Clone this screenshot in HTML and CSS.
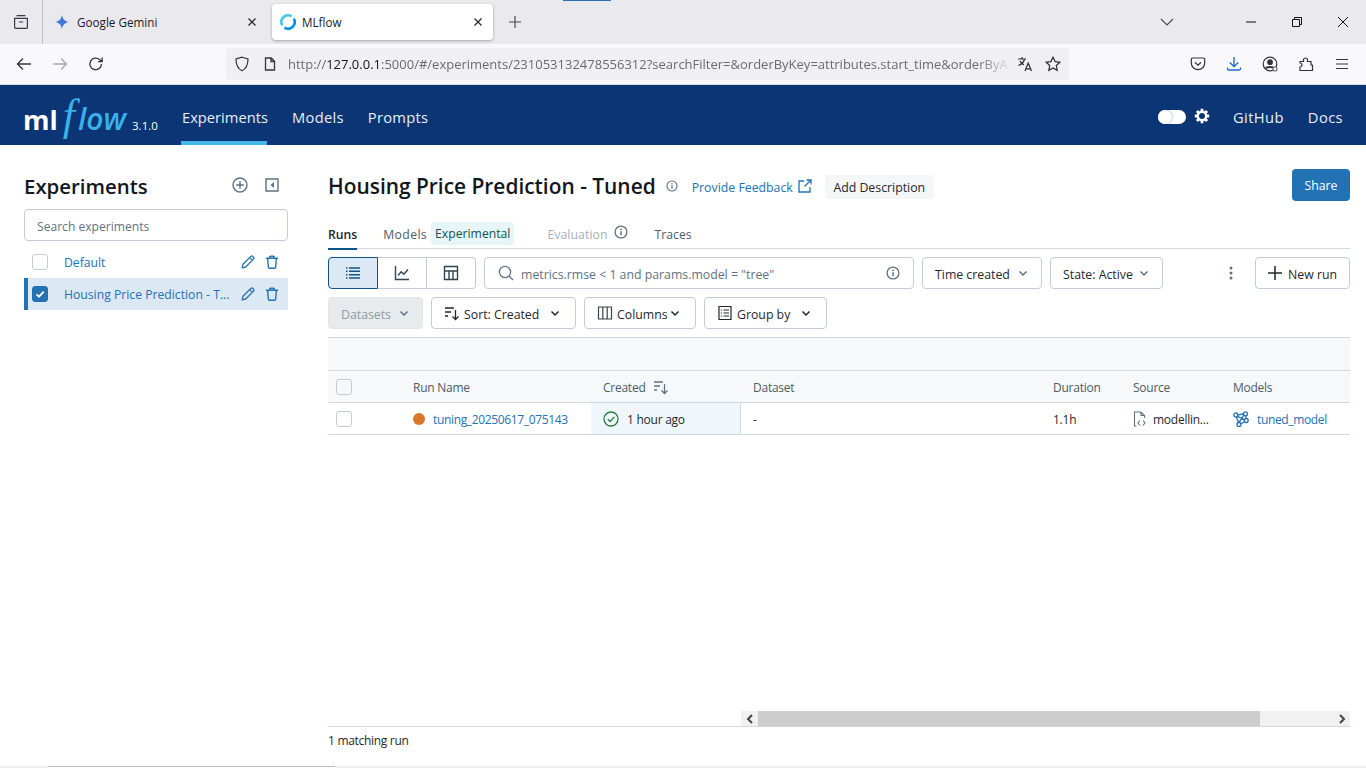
FILE: index.html
```html
<!DOCTYPE html>
<html lang="en">
<head>
  <meta charset="UTF-8">
  <title>MLflow</title>
  <link rel="stylesheet" href="styles.css">
</head>
<body>
  <svg class="sprite" width="0" height="0">
    <symbol id="i-chev" viewBox="0 0 12 12"><path d="M2.5 4.5 6 8l3.5-3.5" fill="none" stroke="currentColor" stroke-width="1.5"/></symbol>
    <symbol id="i-info" viewBox="0 0 14 14"><circle cx="7" cy="7" r="5.9" fill="none" stroke="currentColor" stroke-width="1.3"/><path d="M7 6.2v4" stroke="currentColor" stroke-width="1.5"/><circle cx="7" cy="4.3" r=".9" fill="currentColor"/></symbol>
    <symbol id="i-pencil" viewBox="0 0 14 14"><path d="M1.2 12.8 2 9.2 9.8 1.4a1.3 1.3 0 0 1 1.8 0l.9.9a1.3 1.3 0 0 1 0 1.8L4.7 12z M8.6 2.6l2.8 2.8" fill="none" stroke="currentColor" stroke-width="1.3" stroke-linejoin="round"/></symbol>
    <symbol id="i-trash" viewBox="0 0 14 14"><path d="M1 3.3h12M4.7 3.3V2.2a1 1 0 0 1 1-1h2.6a1 1 0 0 1 1 1v1.1M2.6 3.3l.8 9a1 1 0 0 0 1 .9h5.2a1 1 0 0 0 1-.9l.8-9" fill="none" stroke="currentColor" stroke-width="1.4"/></symbol>
  </svg>

  <span class="loading-mark"></span>

  <div class="tabstrip">
    <div class="strip-left">
      <svg class="ico16" viewBox="0 0 16 16" fill="none" stroke="#3b3b45" stroke-width="1.2"><path d="M3.5 1.6h9M1.6 4.4h12.8v9a1 1 0 0 1-1 1H2.6a1 1 0 0 1-1-1z M5.8 8h4.4"/></svg>
    </div>
    <div class="tab">
      <svg class="ico14" viewBox="0 0 14 14"><path d="M7 0c.5 3.800 3 6.400 7 7-4 .6-6.500 3.200-7 7-.5-3.800-3-6.400-7-7 4-.6 6.500-3.200 7-7z" fill="#3f78d8"/></svg>
      <span class="tab-title">Google Gemini</span>
      <svg class="tab-x" viewBox="0 0 10 10"><path d="M1.5 1.5l7 7m0-7-7 7" stroke="#2b2b33" stroke-width="1.3"/></svg>
    </div>
    <div class="tab tab-active">
      <svg class="ico16" viewBox="0 0 16 16" fill="none" stroke-width="2.6"><path d="M2.2 11.3A6.700 6.700 0 0 1 11.5 2.300" stroke="#43c9ed"/><path d="M13.8 4.700A6.700 6.700 0 0 1 4.500 13.700" stroke="#0194e2"/></svg>
      <span class="tab-title">MLflow</span>
      <svg class="tab-x" viewBox="0 0 10 10"><path d="M1.5 1.5l7 7m0-7-7 7" stroke="#2b2b33" stroke-width="1.3"/></svg>
    </div>
    <svg class="newtab" viewBox="0 0 14 14"><path d="M7 1v12M1 7h12" stroke="#4b4b55" stroke-width="1.2"/></svg>
    <div class="win-btns">
      <svg class="ico14 tabs-down" viewBox="0 0 14 14"><path d="M1 4l6 6 6-6" fill="none" stroke="#4b4b55" stroke-width="1.2"/></svg>
      <svg class="win-ico" viewBox="0 0 12 12"><path d="M1 6h10" stroke="#111" stroke-width="1"/></svg>
      <svg class="win-ico" viewBox="0 0 12 12" fill="none" stroke="#111"><path d="M1.5 3.500h7v7h-7z M3.500 3.500v-2h7v7h-2"/></svg>
      <svg class="win-ico" viewBox="0 0 12 12"><path d="M1 1l10 10m0-10L1 11" stroke="#111" stroke-width="1"/></svg>
    </div>
  </div>

  <div class="toolbar">
    <div class="nav-btns">
      <svg class="ico16" viewBox="0 0 16 16" fill="none" stroke="#33333b" stroke-width="1.3"><path d="M15 8H1.500M7 2.500 1.500 8 7 13.500"/></svg>
      <svg class="ico16" viewBox="0 0 16 16" fill="none" stroke="#a9a9b0" stroke-width="1.3"><path d="M1 8h13.500M9 2.500 14.500 8 9 13.500"/></svg>
      <svg class="ico16" viewBox="0 0 16 16" fill="none" stroke="#33333b" stroke-width="1.3"><path d="M13.5 8A5.800 5.800 0 1 1 11.600 3.600L14 5.500M14.200 1.500v4.200H10"/></svg>
    </div>
    <div class="urlbar">
      <svg class="ico16" viewBox="0 0 16 16" fill="none" stroke="#33333b" stroke-width="1.2"><path d="M8 1.200 14 3c0 6-1.800 9.800-6 11.800C3.800 12.800 2 9 2 3z"/></svg>
      <svg class="ico14 page-ico" viewBox="0 0 14 14" fill="none" stroke="#33333b" stroke-width="1.3"><path d="M2.500 1h5.700L11.500 4.300V13h-9z M8 1v3.500h3.500"/></svg>
      <span class="url">http://<b>127.0.0.1</b>:5000/#/experiments/231053132478556312?searchFilter=&amp;orderByKey=attributes.start_time&amp;orderByA</span>
      <svg class="ico16 translate" viewBox="0 0 16 16" fill="none" stroke="#2b2b33" stroke-width="1.2"><path d="M1 3h8M5 1v2M7.500 3c-.7 3-3 5.500-6 6.500M3 5c.8 2 2.300 3.200 4 3.800M8 15l3.200-8 3.300 8M9 12.800h4.500"/></svg>
      <svg class="ico16" viewBox="0 0 16 16" fill="none" stroke="#2b2b33" stroke-width="1.2"><path d="m8 1.200 2.100 4.400 4.700.6-3.500 3.300.9 4.800L8 12l-4.200 2.300.9-4.800L1.200 6.200l4.700-.6z"/></svg>
    </div>
    <div class="tool-right">
      <svg class="ico16" viewBox="0 0 16 16" fill="none" stroke="#33333b" stroke-width="1.2"><path d="M2.500 2h11a1.200 1.200 0 0 1 1.200 1.200V7A6.700 6.700 0 0 1 1.300 7V3.200A1.200 1.200 0 0 1 2.500 2z M5 6.300l3 2.800 3-2.800"/></svg>
      <svg class="ico16" viewBox="0 0 16 16" fill="none" stroke="#1a66c9" stroke-width="1.3"><path d="M8 1v9.500M3.800 6.500 8 10.700l4.200-4.200M1.500 11.500v1.200a1.300 1.300 0 0 0 1.300 1.300h10.400a1.300 1.300 0 0 0 1.300-1.300v-1.200"/></svg>
      <svg class="ico16" viewBox="0 0 16 16" fill="none" stroke="#33333b" stroke-width="1.2"><circle cx="8" cy="8" r="6.800"/><circle cx="8" cy="6.200" r="2.300" fill="#33333b"/><path d="M3.800 12.500c1-2 7.400-2 8.400 0" stroke-width="2"/><circle cx="13" cy="13" r="2" fill="#f9f9fb" stroke="#777"/></svg>
      <svg class="ico16" viewBox="0 0 16 16" fill="none" stroke="#33333b" stroke-width="1.2"><path d="M2 5.500h3.500V4a2 2 0 0 1 4 0v1.500H13V9h1.500V14.500H2V11a2 2 0 0 0 0-4z"/></svg>
      <svg class="ico16" viewBox="0 0 16 16" stroke="#33333b" stroke-width="1.2"><path d="M2 3.500h12M2 8h12M2 12.500h12"/></svg>
    </div>
  </div>

  <header class="topnav">
    <div class="logo"><span class="logo-ml">ml</span><span class="logo-f">f</span><span class="logo-flow">low</span><span class="version">3.1.0</span></div>
    <nav class="topnav-links">
      <a class="topnav-link current">Experiments</a>
      <a class="topnav-link">Models</a>
      <a class="topnav-link">Prompts</a>
    </nav>
    <div class="topnav-right">
      <span class="toggle"><span class="knob"></span></span>
      <svg class="gear" viewBox="0 0 16 16"><path d="M8 .8v14.400M.8 8h14.400M2.900 2.900l10.200 10.200M13.100 2.900 2.900 13.100" stroke="#fff" stroke-width="2.800"/><circle cx="8" cy="8" r="5.400" fill="#fff"/><circle cx="8" cy="8" r="3" fill="#0b3574"/></svg>
      <a class="topnav-link github">GitHub</a>
      <a class="topnav-link">Docs</a>
    </div>
  </header>

  <div class="page">
    <aside class="sidebar">
      <div class="side-head">
        <h2>Experiments</h2>
        <svg class="side-ico" viewBox="0 0 16 16" fill="none" stroke="#5f7281" stroke-width="1.4"><circle cx="8" cy="8" r="7"/><path d="M8 4.200v7.600M4.200 8h7.600"/></svg>
        <svg class="side-ico collapse" viewBox="0 0 14 14"><path d="M1 1h12v12H1z" fill="none" stroke="#5f7281" stroke-width="1.4"/><path d="M9 4v6L5.500 7z" fill="#5f7281"/></svg>
      </div>
      <input class="side-search" type="text" placeholder="Search experiments">
      <div class="exp-row">
        <span class="check"></span>
        <span class="exp-name">Default</span>
        <svg class="exp-ico"><use href="#i-pencil"/></svg>
        <svg class="exp-ico"><use href="#i-trash"/></svg>
      </div>
      <div class="exp-row selected">
        <span class="check on"><svg viewBox="0 0 12 12"><path d="M2.500 6.300 5 8.700l4.700-5" fill="none" stroke="#fff" stroke-width="1.800"/></svg></span>
        <span class="exp-name">Housing Price Prediction - T...</span>
        <svg class="exp-ico"><use href="#i-pencil"/></svg>
        <svg class="exp-ico"><use href="#i-trash"/></svg>
      </div>
    </aside>

    <main class="main">
      <div class="title-row">
        <h1>Housing Price Prediction - Tuned</h1>
        <svg class="info title-info"><use href="#i-info"/></svg>
        <a class="feedback">Provide Feedback</a>
        <svg class="ext" viewBox="0 0 14 14" fill="none" stroke="#2272b4" stroke-width="1.3"><path d="M6 2H1v11h11V8M8.500 1H13v4.500M13 1 6.500 7.500"/></svg>
        <button class="add-desc">Add Description</button>
        <button class="share">Share</button>
      </div>

      <div class="tabs">
        <a class="tab-link active">Runs</a>
        <a class="tab-link models">Models</a>
        <span class="tag">Experimental</span>
        <a class="tab-link disabled">Evaluation</a>
        <svg class="info eval-info"><use href="#i-info"/></svg>
        <a class="tab-link traces">Traces</a>
      </div>

      <div class="controls">
        <div class="segments">
          <span class="segment on"><svg class="ico16" viewBox="0 0 16 16" stroke="#0e538b" stroke-width="1.4"><path d="M4 3h11M4 6.300h11M4 9.700h11M4 13h11M1 3h1.500M1 6.300h1.500M1 9.700h1.500M1 13h1.500"/></svg></span>
          <span class="segment"><svg class="ico16" viewBox="0 0 16 16" fill="none" stroke="#33434f" stroke-width="1.4"><path d="M1.500 1v13.500H15M4 10.500l3.200-3.700 2.600 2.400L14 4.500"/></svg></span>
          <span class="segment"><svg class="ico16" viewBox="0 0 16 16" fill="none" stroke="#33434f" stroke-width="1.4"><path d="M1.500 1.500h13v13h-13z M1.500 6h13M6 6v8.500M10 6v8.500"/></svg></span>
        </div>
        <div class="search">
          <svg class="ico16" viewBox="0 0 16 16" fill="none" stroke="#5f7281" stroke-width="1.3"><circle cx="7" cy="7" r="5.600"/><path d="m11 11 4 4"/></svg>
          <span class="search-text">metrics.rmse &lt; 1 and params.model = "tree"</span>
          <svg class="info"><use href="#i-info"/></svg>
        </div>
        <button class="btn time">Time created<svg class="chev"><use href="#i-chev"/></svg></button>
        <button class="btn state">State: Active<svg class="chev"><use href="#i-chev"/></svg></button>
        <svg class="kebab" viewBox="0 0 4 14" fill="#5f7281"><circle cx="2" cy="2" r="1.500"/><circle cx="2" cy="7" r="1.500"/><circle cx="2" cy="12" r="1.500"/></svg>
        <button class="btn new-run"><svg class="plus" viewBox="0 0 14 14"><path d="M7 0v14M0 7h14" stroke="#1f272d" stroke-width="1.500"/></svg>New run</button>
      </div>

      <div class="controls second">
        <button class="btn datasets">Datasets<svg class="chev"><use href="#i-chev"/></svg></button>
        <button class="btn sort"><svg class="ico16" viewBox="0 0 16 16" fill="none" stroke="#1f272d" stroke-width="1.3"><path d="M1 3h9M1 7h6M1 11h3M11.500 5v9.500M8.500 11.500l3 3 3-3"/></svg>Sort: Created<svg class="chev"><use href="#i-chev"/></svg></button>
        <button class="btn columns"><svg class="ico16" viewBox="0 0 16 16" fill="none" stroke="#33434f" stroke-width="1.2"><path d="M1.500 2h13v12h-13z M5.800 2v12M10.200 2v12"/></svg>Columns<svg class="chev small"><use href="#i-chev"/></svg></button>
        <button class="btn group"><svg class="ico16" viewBox="0 0 16 16" fill="none" stroke="#1f272d" stroke-width="1.2"><path d="M2 1.500h12v13H2z M6.500 5H12M6.500 8H12M6.500 11H12M3.800 5H5M3.800 8H5M3.800 11H5"/></svg>Group by<svg class="chev"><use href="#i-chev"/></svg></button>
      </div>

      <div class="table-wrap">
        <div class="band"></div>
        <div class="grid head">
          <div class="cell"><span class="check grey"></span></div>
          <div class="cell flush">Run Name</div>
          <div class="cell">Created<svg class="sort-ico" viewBox="0 0 16 16" fill="none" stroke="#5f7281" stroke-width="1.3"><path d="M1 3h9M1 7h6M1 11h3M11.500 5v9.500M8.500 11.500l3 3 3-3"/></svg></div>
          <div class="cell">Dataset</div>
          <div class="cell">Duration</div>
          <div class="cell">Source</div>
          <div class="cell">Models</div>
        </div>
        <div class="grid row">
          <div class="cell"><span class="check grey"></span></div>
          <div class="cell flush"><span class="dot"></span><a class="link">tuning_20250617_075143</a></div>
          <div class="cell created"><svg class="ok" viewBox="0 0 16 16" fill="none" stroke="#277c43" stroke-width="1.3"><circle cx="8" cy="8" r="7"/><path d="m4.800 8.200 2.300 2.300 4.200-4.600"/></svg>1 hour ago</div>
          <div class="cell">-</div>
          <div class="cell">1.1h</div>
          <div class="cell"><svg class="src" viewBox="0 0 14 16" fill="none" stroke="#5f7281" stroke-width="1.1"><path d="M3.500 15H1.500V1h6.500l3.500 3.500V7M8 1v3.500h3.500M7 9.500 5 12l2 2.500M10 9.500l2 2.500-2 2.500"/></svg>modellin...</div>
          <div class="cell"><svg class="model" viewBox="0 0 16 16" fill="none" stroke="#2272b4" stroke-width="1.3"><circle cx="2.800" cy="4" r="2"/><circle cx="12.500" cy="2.800" r="2"/><circle cx="13.200" cy="9.500" r="2"/><circle cx="6" cy="13.500" r="2"/><path d="M4.800 3.800l5.700-.8M4.300 5.300l7.200 3.200M3.500 6l2 5.500M12.700 4.800l.4 2.700M11.500 10.700 7.800 12.800M11 3.800 6 11.600"/></svg><a class="link">tuned_model</a></div>
        </div>
        <div class="spacer"></div>
        <div class="scrollbar">
          <span class="arrow"><svg viewBox="0 0 8 10"><path d="M6 1 2 5l4 4" fill="none" stroke="#444" stroke-width="2"/></svg></span>
          <span class="thumb"></span>
          <span class="arrow end"><svg viewBox="0 0 8 10"><path d="m2 1 4 4-4 4" fill="none" stroke="#444" stroke-width="2"/></svg></span>
        </div>
      </div>
      <div class="status">1 matching run</div>
    </main>
  </div>

  <div class="taskbar"><span class="task-item"></span></div>
</body>
</html>
```

FILE: styles.css
```css
* {
  box-sizing: border-box;
}
html, body {
  height: 100%;
}
body {
  margin: 0;
  height: 768px;
  overflow: hidden;
  display: flex;
  flex-direction: column;
  background: #fff;
  color: #1f272d;
  font-family: "Open Sans", "Noto Sans", sans-serif;
  font-size: 12.3px;
}
a {
  text-decoration: none;
}
button {
  font-family: inherit;
  font-size: inherit;
  color: inherit;
}
.sprite {
  position: absolute;
}
.ico14 {
  width: 14px;
  height: 14px;
  flex: none;
}
.ico16 {
  width: 16px;
  height: 16px;
  flex: none;
}

/* browser chrome */
.loading-mark {
  position: absolute;
  left: 563px;
  top: 0;
  width: 48px;
  height: 1px;
  background: #2a6fb0;
}
.tabstrip {
  height: 44px;
  flex: none;
  display: flex;
  align-items: center;
  background: #e9e9ee;
}
.strip-left {
  width: 43px;
  height: 44px;
  display: flex;
  align-items: center;
  justify-content: center;
  border-right: 1px solid #bdbdc4;
}
.tab {
  width: 229px;
  height: 36px;
  display: flex;
  align-items: center;
  padding: 0 15px 0 12px;
  gap: 8px;
  font-size: 11.7px;
  color: #1b1b22;
}
.tab-active {
  width: 221px;
  background: #fff;
  border-radius: 4px;
  box-shadow: 0 1px 3px rgba(0, 0, 0, 0.3);
  padding: 0 10px 0 8px;
  gap: 6px;
}
.tab-title {
  flex: 1;
}
.tab-x {
  width: 10px;
  height: 10px;
}
.newtab {
  width: 14px;
  height: 14px;
  margin-left: 15px;
}
.win-btns {
  margin-left: auto;
  display: flex;
  align-items: center;
  padding-right: 17px;
}
.tabs-down {
  margin-right: 37px;
}
.win-ico {
  width: 12px;
  height: 12px;
  margin-left: 34px;
}
.toolbar {
  height: 41px;
  flex: none;
  display: flex;
  align-items: center;
  background: #f9f9fb;
  border-bottom: 1px solid #dcdce0;
}
.nav-btns {
  width: 226px;
  display: flex;
  gap: 20px;
  padding-left: 16px;
}
.urlbar {
  width: 843px;
  height: 32px;
  display: flex;
  align-items: center;
  gap: 9px;
  padding: 0 8px;
  background: #f0f0f4;
  border-radius: 4px;
}
.page-ico {
  margin-left: 4px;
}
.url {
  flex: 1;
  min-width: 0;
  margin-left: 2px;
  white-space: nowrap;
  font-size: 13px;
  color: #6a6a72;
  -webkit-mask-image: linear-gradient(to right, #000 690px, transparent 724px);
  mask-image: linear-gradient(to right, #000 690px, transparent 724px);
}
.url b {
  font-weight: 400;
  color: #15141a;
}
.translate {
  margin-right: 3px;
}
.tool-right {
  display: flex;
  margin-left: 121px;
  gap: 20px;
}

/* top nav */
.topnav {
  height: 60px;
  flex: none;
  display: flex;
  align-items: center;
  background: #0b3574;
  color: #fff;
  padding: 0 23px 0 24px;
}
.logo {
  width: 157px;
  display: flex;
  align-items: baseline;
  color: #fff;
  line-height: 1;
  padding-top: 6px;
}
.logo-ml {
  font-size: 27px;
  font-weight: 700;
  margin-left: -1px;
}
.logo-f {
  font-family: "Liberation Serif", serif;
  font-style: italic;
  font-size: 44px;
  line-height: 0.6;
  color: #3bb0ea;
  margin-left: 5px;
  margin-right: 3px;
}
.logo-flow {
  font-style: italic;
  font-weight: 600;
  font-size: 30px;
  color: #3bb0ea;
}
.version {
  font-size: 11.5px;
  margin-left: 6px;
}
.topnav-links {
  display: flex;
  gap: 24px;
  align-self: stretch;
}
.topnav-link {
  display: flex;
  align-items: center;
  height: 100%;
  padding-top: 4px;
  font-size: 14.7px;
  letter-spacing: 0.3px;
  color: #e8eef6;
}
.topnav-link.current {
  border-bottom: 4px solid #43b8e8;
  padding-top: 8px;
  padding-left: 1px;
  width: 86px;
  margin-right: 1px;
  letter-spacing: 0;
}
.topnav-right {
  margin-left: auto;
  display: flex;
  align-items: center;
  align-self: stretch;
  gap: 24px;
}
.topnav-right .topnav-link {
  letter-spacing: 0.4px;
}
.toggle {
  width: 28px;
  height: 14px;
  margin-top: 4px;
  background: #fff;
  border-radius: 7px;
  position: relative;
}
.knob {
  position: absolute;
  left: 0;
  top: 0;
  width: 14px;
  height: 14px;
  border-radius: 50%;
  background: #fff;
  box-shadow: 0 0 2px rgba(11, 53, 116, 0.6);
}
.gear {
  width: 16px;
  height: 16px;
  margin-left: -16px;
  margin-top: 2px;
}
.github {
  margin-left: -1px;
}

/* page */
.page {
  flex: 1;
  min-height: 0;
  display: flex;
}
.sidebar {
  width: 288px;
  flex: none;
  padding: 24px 0 0 24px;
}
.side-head {
  height: 34px;
  display: flex;
  align-items: center;
}
.side-head h2 {
  flex: 1;
  margin: 0;
  font-size: 20.4px;
  font-weight: 600;
  color: #11171c;
}
.side-ico {
  width: 16px;
  height: 16px;
  margin: -2px 10px 0 0;
}
.side-ico.collapse {
  width: 14px;
  height: 14px;
  margin: -2px 9px 0 7px;
}
.side-search {
  display: block;
  width: 100%;
  height: 32px;
  margin-top: 6px;
  border: 1px solid #c0cdd8;
  border-radius: 4px;
  padding: 2px 12px 0;
  font-family: inherit;
  font-size: 12.1px;
  outline: none;
}
.side-search::placeholder {
  color: #5f7281;
}
.exp-row {
  height: 32px;
  display: flex;
  align-items: center;
  padding: 0 9px 0 8px;
  color: #2272b4;
}
.side-search + .exp-row {
  margin-top: 5px;
}
.exp-row.selected {
  background: #dce8f3;
  border-left: 4px solid #2272b4;
  padding-left: 4px;
}
.check {
  width: 16px;
  height: 16px;
  flex: none;
  display: block;
  border: 1px solid #c0cdd8;
  border-radius: 3px;
  background: #fff;
}
.check.on {
  background: #2272b4;
  border-color: #2272b4;
  padding: 1px;
}
.check.on svg {
  display: block;
  width: 12px;
  height: 12px;
}
.exp-name {
  flex: 1;
  min-width: 0;
  margin-left: 16px;
  font-size: 12.2px;
  white-space: nowrap;
}
.exp-ico {
  width: 14px;
  height: 14px;
  flex: none;
  margin-left: 10px;
}

.main {
  flex: 1;
  min-width: 0;
  display: flex;
  flex-direction: column;
  margin-left: 40px;
  padding: 24px 16px 0 0;
}
.title-row {
  height: 32px;
  flex: none;
  display: flex;
  align-items: center;
}
.title-row h1 {
  margin: 2px 0 0;
  font-size: 20.9px;
  font-weight: 600;
  color: #11171c;
  white-space: nowrap;
}
.info {
  width: 14px;
  height: 14px;
  flex: none;
  color: #5f7281;
}
.title-info {
  width: 12px;
  height: 12px;
  margin: 2px 0 0 10px;
}
.feedback {
  margin: 4px 0 0 14px;
  color: #2272b4;
}
.ext {
  width: 14px;
  height: 14px;
  margin: 2px 0 0 5px;
}
.add-desc {
  margin: 4px 0 0 13px;
  height: 24px;
  width: 109px;
  padding: 0;
  border: none;
  border-radius: 4px;
  background: #f5f6f7;
}
.share {
  margin-left: auto;
  width: 58px;
  height: 32px;
  padding: 0;
  border: none;
  border-radius: 4px;
  background: #2272b4;
  color: #fff;
}
.tabs {
  margin-top: 16px;
  height: 32px;
  flex: none;
  display: flex;
  align-items: center;
  font-size: 12.2px;
  border-bottom: 1px solid #d1d9e1;
}
.tab-link {
  height: 100%;
  display: flex;
  align-items: center;
  padding-top: 4px;
  color: #4b5c69;
}
.tab-link.active {
  margin-right: 26px;
  font-weight: 600;
  color: #1f272d;
  border-bottom: 2px solid #0e538b;
  margin-bottom: -1px;
  height: 33px;
}
.tab-link.models {
  letter-spacing: 0.4px;
}
.tab-link.disabled {
  margin-left: 33px;
  letter-spacing: 0.1px;
  color: #a3b0bb;
}
.tag {
  margin-left: 4px;
  margin-top: 1px;
  height: 23px;
  padding: 0 4px;
  display: flex;
  align-items: center;
  border-radius: 4px;
  background: #e6f6f8;
  color: #13534f;
}
.eval-info {
  margin-left: 6px;
  margin-top: -1px;
}
.traces {
  margin-left: 27px;
}
.controls {
  margin-top: 8px;
  height: 32px;
  flex: none;
  display: flex;
  align-items: center;
}
.controls.second {
  gap: 8px;
}
.segments {
  display: flex;
  height: 32px;
}
.segment {
  width: 49px;
  display: flex;
  align-items: center;
  justify-content: center;
  border: 1px solid #c0cdd8;
  border-left: none;
}
.segment:last-child {
  border-radius: 0 4px 4px 0;
}
.segment.on {
  width: 50px;
  background: #dce8f3;
  border: 1px solid #0e538b;
  border-radius: 4px 0 0 4px;
}
.search {
  width: 430px;
  height: 32px;
  margin-left: 8px;
  display: flex;
  align-items: center;
  gap: 7px;
  padding: 0 13px;
  border: 1px solid #c0cdd8;
  border-radius: 4px;
}
.search-text {
  flex: 1;
  padding-top: 2px;
  color: #5f7281;
  white-space: pre;
}
.btn {
  height: 32px;
  display: flex;
  align-items: center;
  padding: 2px 12px 0;
  background: #fff;
  border: 1px solid #c0cdd8;
  border-radius: 4px;
  white-space: nowrap;
}
.btn .ico16 {
  margin: -2px 4px 0 0;
}
.chev {
  width: 12px;
  height: 12px;
  flex: none;
  margin: -2px 0 0 auto;
  color: #5f7281;
}
.time {
  width: 120px;
  margin-left: 8px;
}
.state {
  width: 113px;
  margin-left: 8px;
}
.kebab {
  width: 4px;
  height: 14px;
  margin-left: 66px;
}
.new-run {
  width: 95px;
  margin-left: auto;
}
.plus {
  width: 14px;
  height: 14px;
  margin: -2px auto 0 0;
}
.datasets {
  width: 95px;
  background: #e8ebee;
  border-color: #e0e5e9;
  color: #8e9ca8;
}
.sort {
  width: 145px;
  padding-right: 14px;
}
.columns {
  width: 112px;
  padding-right: 14px;
}
.group {
  width: 123px;
  padding-right: 14px;
}
.sort .chev,
.group .chev,
.chev.small {
  color: #1f272d;
}
.table-wrap {
  flex: 1;
  min-height: 0;
  margin-top: 8px;
  display: flex;
  flex-direction: column;
  border-bottom: 1px solid #d1d9e1;
}
.band {
  height: 34px;
  flex: none;
  background: #f7f8f9;
  border-top: 1px solid #d1d9e1;
  border-bottom: 1px solid #d1d9e1;
}
.grid {
  height: 32px;
  flex: none;
  display: grid;
  grid-template-columns: 85px 178px 150px 300px 80px 100px 129px;
  font-size: 12px;
  letter-spacing: -0.25px;
  border-bottom: 1px solid #d1d9e1;
}
.grid.head {
  background: #f7f8f9;
  color: #4b5c69;
}
.cell {
  display: flex;
  align-items: center;
  padding: 1px 12px 0;
  min-width: 0;
  white-space: nowrap;
}
.cell:first-child {
  padding: 1px 8px 0;
}
.cell.flush {
  padding: 1px 0 0;
}
.check.grey {
  border-color: #c0cdd8;
}
.head .check.grey {
  background: #f7f8f9;
}
.sort-ico {
  width: 16px;
  height: 16px;
  margin-left: 8px;
}
.dot {
  width: 12px;
  height: 12px;
  margin-right: 8px;
  border-radius: 50%;
  background: #d9782a;
}
.link {
  color: #2272b4;
  letter-spacing: -0.35px;
}
.created {
  background: #f0f7fc;
  border-right: 1px solid #d1d9e1;
}
.ok {
  width: 16px;
  height: 16px;
  margin-right: 8px;
}
.src {
  width: 14px;
  height: 16px;
  margin-right: 6px;
  flex: none;
}
.model {
  width: 16px;
  height: 16px;
  margin-right: 8px;
  flex: none;
}
.spacer {
  flex: 1;
}
.scrollbar {
  height: 15px;
  width: 609px;
  margin-left: auto;
  flex: none;
  display: flex;
  background: #f1f1f1;
}
.arrow {
  width: 17px;
  display: flex;
  align-items: center;
  justify-content: center;
}
.arrow svg {
  width: 8px;
  height: 10px;
}
.arrow.end {
  margin-left: auto;
}
.thumb {
  width: 502px;
  background: #cdcdcd;
}
.status {
  height: 39px;
  flex: none;
  display: flex;
  align-items: center;
  padding-bottom: 12px;
  font-size: 12px;
  letter-spacing: -0.3px;
}
.taskbar {
  height: 2px;
  flex: none;
  background: #efefef;
  padding-left: 48px;
}
.task-item {
  display: block;
  width: 287px;
  height: 2px;
  background: #fff;
  border-top: 1px solid #bbb;
}
```
